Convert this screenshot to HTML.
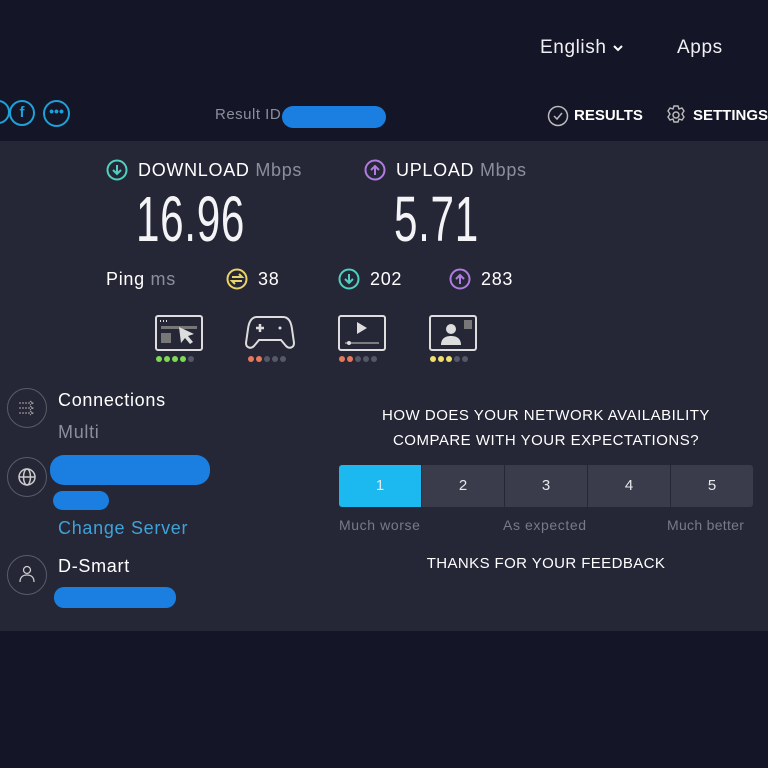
<!DOCTYPE html>
<html><head><meta charset="utf-8"><style>
*{margin:0;padding:0;box-sizing:border-box}
body{width:768px;height:768px;background:#141526;font-family:"Liberation Sans",sans-serif;color:#fff;position:relative;overflow:hidden}
.a{position:absolute;white-space:nowrap}
.panel{position:absolute;left:0;top:141px;width:768px;height:490px;background:#252736}
.big{font-family:"Liberation Sans Narrow","Liberation Sans",sans-serif;font-size:64px;font-weight:normal;transform:scaleX(0.66);transform-origin:left top;letter-spacing:1px;color:#f4f4f6}
.lbl{font-size:18px;letter-spacing:0.7px}
.g{color:#8c8e9c}
.circ{position:absolute;border-radius:50%}
.blob{position:absolute;background:#1a7fe0;border-radius:12px}
.dots{position:absolute;display:flex;gap:2px}
.dots i{width:6px;height:6px;border-radius:50%;background:#555866;display:block}
.seg{position:absolute;top:465px;height:42px;width:82px;background:#3a3c4b;color:#e8e8ee;font-size:15px;text-align:center;line-height:42px}
</style></head><body>
<div class="a" style="left:540px;top:37px;font-size:19px;color:#f0f0f4;letter-spacing:0.6px">English <svg width="12" height="10" viewBox="0 0 12 10"><path d="M2 3l4 4 4-4" stroke="#fff" stroke-width="2" fill="none"/></svg></div>
<div class="a" style="left:677px;top:37px;font-size:19px;color:#f0f0f4;letter-spacing:0.6px">Apps</div>

<div class="circ" style="left:-14px;top:100px;width:24px;height:24px;border:2px solid #1ea0d8"></div>
<div class="circ" style="left:9px;top:100px;width:26px;height:26px;border:2px solid #1ea0d8;color:#1ea0d8;font-weight:bold;font-size:15px;text-align:center;line-height:22px">f</div>
<div class="circ" style="left:43px;top:100px;width:27px;height:27px;border:2px solid #1ea0d8;color:#1ea0d8;font-size:14px;text-align:center;line-height:18px;font-weight:bold">•••</div>
<div class="a g" style="left:215px;top:106px;font-size:15px;letter-spacing:0.5px">Result ID</div>
<div class="blob" style="left:282px;top:106px;width:104px;height:22px;border-radius:11px"></div>
<svg class="a" style="left:547px;top:105px" width="22" height="22" viewBox="0 0 22 22"><circle cx="11" cy="11" r="9.5" stroke="#bbb" stroke-width="1.5" fill="none"/><path d="M7 11l3 3 5-6" stroke="#bbb" stroke-width="1.5" fill="none"/></svg>
<div class="a" style="left:574px;top:107px;font-size:15px;font-weight:bold">RESULTS</div>
<svg class="a" style="left:665px;top:104px" width="22" height="22" viewBox="0 0 22 22"><circle cx="11" cy="11" r="3" stroke="#bbb" stroke-width="1.5" fill="none"/><path d="M9 2h4l1 3 3-1 2 3-2 3 2 3-2 3-3-1-1 3H9l-1-3-3 1-2-3 2-3-2-3 2-3 3 1z" stroke="#bbb" stroke-width="1.4" fill="none"/></svg>
<div class="a" style="left:693px;top:107px;font-size:15px;font-weight:bold">SETTINGS</div>

<div class="panel"></div>
<svg class="a" style="left:106px;top:159px" width="22" height="22" viewBox="0 0 22 22"><circle cx="11" cy="11" r="9.5" stroke="#4fd1c0" stroke-width="2" fill="none"/><path d="M11 6v9M7 11l4 4 4-4" stroke="#4fd1c0" stroke-width="2" fill="none"/></svg>
<div class="a lbl" style="left:138px;top:160px">DOWNLOAD <span class="g">Mbps</span></div>
<div class="a big" style="left:136px;top:182px">16.96</div>
<svg class="a" style="left:364px;top:159px" width="22" height="22" viewBox="0 0 22 22"><circle cx="11" cy="11" r="9.5" stroke="#b07ce0" stroke-width="2" fill="none"/><path d="M11 16V7M7 11l4-4 4 4" stroke="#b07ce0" stroke-width="2" fill="none"/></svg>
<div class="a lbl" style="left:396px;top:160px">UPLOAD <span class="g">Mbps</span></div>
<div class="a big" style="left:394px;top:182px">5.71</div>

<div class="a lbl" style="left:106px;top:269px">Ping <span class="g">ms</span></div>
<svg class="a" style="left:226px;top:268px" width="22" height="22" viewBox="0 0 22 22"><circle cx="11" cy="11" r="9.5" stroke="#e8d46a" stroke-width="2" fill="none"/><path d="M6 9h10l-3-3M16 13H6l3 3" stroke="#e8d46a" stroke-width="2" fill="none"/></svg>
<div class="a lbl" style="left:258px;top:269px">38</div>
<svg class="a" style="left:338px;top:268px" width="22" height="22" viewBox="0 0 22 22"><circle cx="11" cy="11" r="9.5" stroke="#4fd1c0" stroke-width="2" fill="none"/><path d="M11 6v9M7 11l4 4 4-4" stroke="#4fd1c0" stroke-width="2" fill="none"/></svg>
<div class="a lbl" style="left:370px;top:269px">202</div>
<svg class="a" style="left:449px;top:268px" width="22" height="22" viewBox="0 0 22 22"><circle cx="11" cy="11" r="9.5" stroke="#b07ce0" stroke-width="2" fill="none"/><path d="M11 16V7M7 11l4-4 4 4" stroke="#b07ce0" stroke-width="2" fill="none"/></svg>
<div class="a lbl" style="left:481px;top:269px">283</div>

<svg class="a" style="left:155px;top:315px" width="48" height="36" viewBox="0 0 48 36"><rect x="1" y="1" width="46" height="34" rx="2" stroke="#ddd" stroke-width="2" fill="none"/><path d="M5 6h1M8 6h1M11 6h1" stroke="#ddd" stroke-width="2"/><rect x="6" y="11" width="36" height="3" fill="#777"/><rect x="6" y="18" width="10" height="10" fill="#777"/><path d="M24 12l2 16 4-5 5 6 3-2-5-6 6-2z" fill="#ddd"/></svg>
<div class="dots" style="left:156px;top:356px"><i style="background:#7ed957"></i><i style="background:#7ed957"></i><i style="background:#7ed957"></i><i style="background:#7ed957"></i><i></i></div>
<svg class="a" style="left:245px;top:315px" width="50" height="36" viewBox="0 0 50 36"><path d="M12 2h26c5 0 8 4 9 12l2 14c0 5-5 6-8 3l-5-6H14l-5 6c-3 3-8 2-8-3l2-14C4 6 7 2 12 2z" stroke="#ddd" stroke-width="2" fill="none"/><path d="M15 9v8M11 13h8" stroke="#ddd" stroke-width="2.5"/><circle cx="35" cy="13" r="1.5" fill="#ddd"/></svg>
<div class="dots" style="left:248px;top:356px"><i style="background:#e8785a"></i><i style="background:#e8785a"></i><i></i><i></i><i></i></div>
<svg class="a" style="left:338px;top:315px" width="48" height="36" viewBox="0 0 48 36"><rect x="1" y="1" width="46" height="34" rx="2" stroke="#ddd" stroke-width="2" fill="none"/><path d="M19 7l10 6-10 6z" fill="#ddd"/><path d="M7 28h34" stroke="#999" stroke-width="1.5"/><circle cx="11" cy="28" r="2" fill="#ddd"/></svg>
<div class="dots" style="left:339px;top:356px"><i style="background:#e8785a"></i><i style="background:#e8785a"></i><i></i><i></i><i></i></div>
<svg class="a" style="left:429px;top:315px" width="48" height="36" viewBox="0 0 48 36"><rect x="1" y="1" width="46" height="34" rx="2" stroke="#ddd" stroke-width="2" fill="none"/><circle cx="22" cy="14" r="5" fill="#ddd"/><path d="M12 30c0-7 5-9 10-9s10 2 10 9z" fill="#ddd"/><rect x="35" y="5" width="8" height="9" fill="#777"/></svg>
<div class="dots" style="left:430px;top:356px"><i style="background:#f0df6e"></i><i style="background:#f0df6e"></i><i style="background:#f0df6e"></i><i></i><i></i></div>

<div class="circ" style="left:7px;top:388px;width:40px;height:40px;border:1.5px solid #5a5c6a"></div>
<svg class="a" style="left:17px;top:398px" width="20" height="20" viewBox="0 0 20 20"><path d="M2 5h14M2 10h14M2 15h14M13 3l3 2-3 2M13 8l3 2-3 2M13 13l3 2-3 2" stroke="#aaa" stroke-width="1" stroke-dasharray="2 1" fill="none"/></svg>
<div class="a lbl" style="left:58px;top:390px">Connections</div>
<div class="a g lbl" style="left:58px;top:422px">Multi</div>
<div class="circ" style="left:7px;top:457px;width:40px;height:40px;border:1.5px solid #5a5c6a"></div>
<svg class="a" style="left:17px;top:467px" width="20" height="20" viewBox="0 0 20 20"><circle cx="10" cy="10" r="8" stroke="#ccc" stroke-width="1.5" fill="none"/><ellipse cx="10" cy="10" rx="3.5" ry="8" stroke="#ccc" stroke-width="1.5" fill="none"/><path d="M2 10h16" stroke="#ccc" stroke-width="1.5"/></svg>
<div class="blob" style="left:50px;top:455px;width:160px;height:30px;border-radius:14px"></div>
<div class="blob" style="left:53px;top:491px;width:56px;height:19px;border-radius:10px"></div>
<div class="a lbl" style="left:58px;top:518px;color:#3fa2d8">Change Server</div>
<div class="circ" style="left:7px;top:555px;width:40px;height:40px;border:1.5px solid #5a5c6a"></div>
<svg class="a" style="left:17px;top:564px" width="20" height="20" viewBox="0 0 20 20"><circle cx="10" cy="6" r="3.5" stroke="#ccc" stroke-width="1.3" fill="none"/><path d="M3 18c0-5 3-7 7-7s7 2 7 7" stroke="#ccc" stroke-width="1.3" fill="none"/></svg>
<div class="a lbl" style="left:58px;top:556px">D-Smart</div>
<div class="blob" style="left:54px;top:587px;width:122px;height:21px;border-radius:10px"></div>

<div class="a" style="left:338px;width:416px;text-align:center;top:403px;font-size:15px;line-height:25px;white-space:normal;letter-spacing:0.5px">HOW DOES YOUR NETWORK AVAILABILITY<br>COMPARE WITH YOUR EXPECTATIONS?</div>
<div class="seg" style="left:339px;background:#1cb8f0;border-radius:3px 0 0 3px">1</div>
<div class="seg" style="left:422px">2</div>
<div class="seg" style="left:505px">3</div>
<div class="seg" style="left:588px">4</div>
<div class="seg" style="left:671px;border-radius:0 3px 3px 0">5</div>
<div class="a g" style="left:339px;top:517px;font-size:14px;color:#777a88;letter-spacing:0.6px">Much worse</div>
<div class="a g" style="left:503px;top:517px;font-size:14px;color:#777a88;letter-spacing:0.6px">As expected</div>
<div class="a g" style="left:667px;top:517px;font-size:14px;color:#777a88;letter-spacing:0.3px">Much better</div>
<div class="a" style="left:338px;width:416px;text-align:center;top:555px;font-size:15px;letter-spacing:0.4px">THANKS FOR YOUR FEEDBACK</div>
</body></html>
